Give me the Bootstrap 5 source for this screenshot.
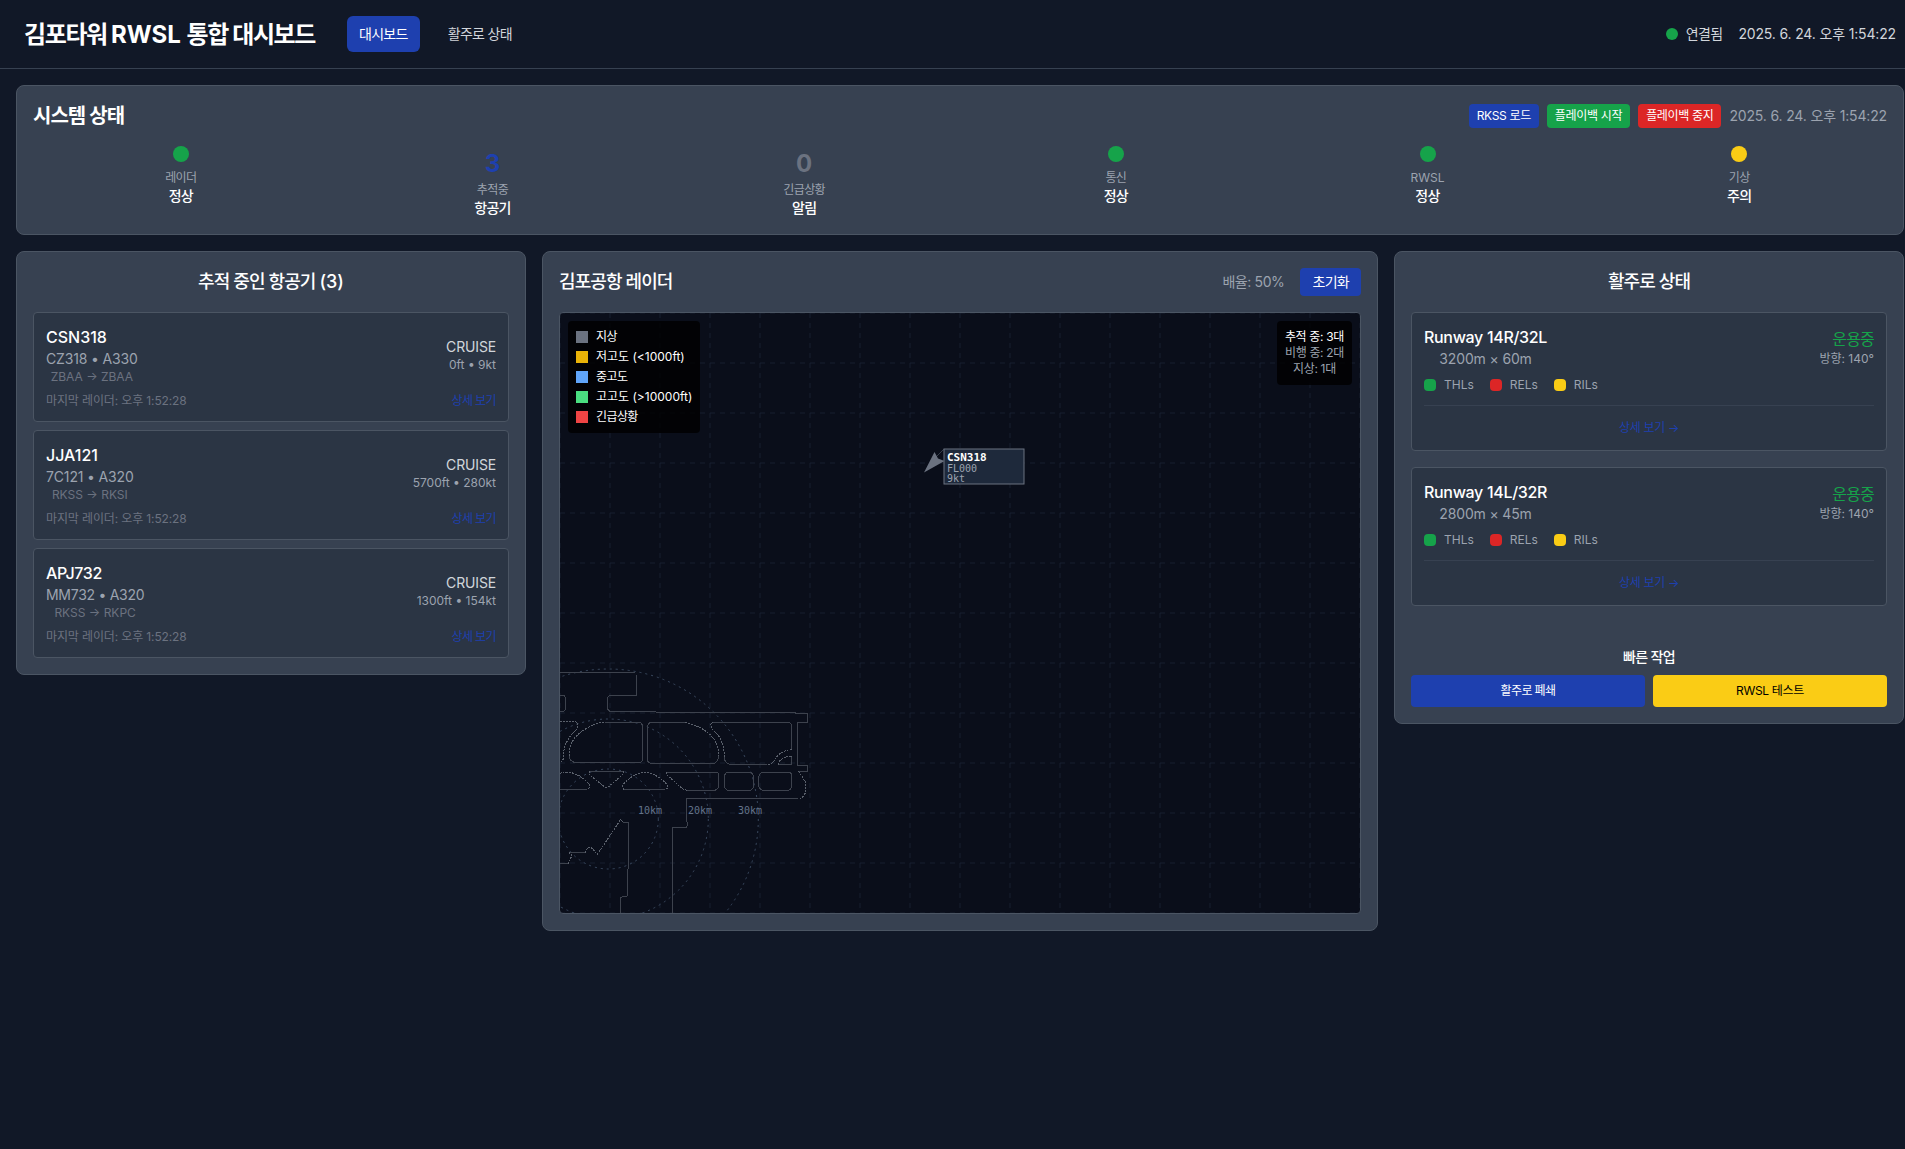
<!DOCTYPE html>
<html lang="ko">
<head>
<meta charset="utf-8">
<title>김포타워 RWSL 통합 대시보드</title>
<meta name="viewport" content="width=device-width, initial-scale=1">
<link href="https://cdn.jsdelivr.net/npm/bootstrap@5.3.0/dist/css/bootstrap.min.css" rel="stylesheet">
<style>
body{background:#111827;color:#fff;font-family:Inter,"Noto Sans CJK KR",sans-serif;font-size:16px;line-height:24px;min-height:100vh;overflow-x:hidden}
h1,h2,h3,h4,p{margin:0}
.topbar{height:69px;border-bottom:1px solid #374151;padding:0 9px 0 24px}
.brand{font-size:24px;line-height:32px;font-weight:700;margin-right:32px;padding-top:1px}
.ko{letter-spacing:-.05em}
.ko-title{letter-spacing:-.058em}
.ko-s{letter-spacing:-.028em}
.num-text{letter-spacing:-.011em}
.rw{letter-spacing:-.02em}
.w5{font-weight:500}
.t12{font-size:12px;line-height:16px}
.t14{font-size:14px;line-height:20px}
.t18{font-size:18px;line-height:28px;font-weight:500}
.t20{font-size:20px;line-height:28px;font-weight:600}
.c3{color:#d1d5db}.c4{color:#9ca3af}.c5{color:#6b7280}.cb{color:#1e40af}.cg{color:#16a34a}
.btn{--bs-btn-border-width:0;--bs-btn-border-radius:4px;--bs-btn-color:#fff}
.b-blue,.b-blue:hover{background:#1e40af;color:#fff}
.b-green,.b-green:hover{background:#16a34a;color:#fff}
.b-red,.b-red:hover{background:#dc2626;color:#fff}
.b-yel,.b-yel:hover{background:#facc15;color:#000}
.nav-btn{padding:8px 12px;font-size:14px;line-height:20px;--bs-btn-border-radius:6px}
.btn-xs{padding:4px 8px;font-size:12px;line-height:16px}
.btn-s{padding:4px 12px;font-size:14px;line-height:20px}
.btn-q{padding:8px;font-size:12px;line-height:16px}
.dot{border-radius:50%;display:inline-block}
.d12{width:12px;height:12px}.d16{width:16px;height:16px;margin-bottom:8px}
.g{background:#16a34a}.y{background:#facc15}.r{background:#dc2626}
.page{padding:16px 1px 16px 16px}
.panel{background:#374151;border:1px solid #4b5563;border-radius:8px;padding:16px}
.num{font-size:24px;line-height:35px;font-weight:700;margin-bottom:1px}
.stat-col{flex:1 1 0;display:flex;flex-direction:column;align-items:center}
.side{width:510px;flex:none}
.box{background:#2b3544;border:1px solid #4b5563;border-radius:4px;padding:12px}
.sw{width:12px;height:12px}.sw-r{border-radius:4px}
.rule{border-top:1px solid #374151;margin-top:12px;padding-top:12px;font-size:12px;line-height:20px}
.radar{position:relative;width:802px;height:602px;border:1px solid #4b5563;border-radius:4px;background:#0a0e1a;overflow:hidden}
.radar svg{display:block}
.float{position:absolute;top:8px;padding:8px;border-radius:4px;background:rgba(0,0,0,.8)}
.float-l{left:8px}.float-r{right:8px}
.mono{font-family:"DejaVu Sans Mono",monospace}
.twy path{vector-effect:non-scaling-stroke}
</style>
</head>
<body>
<header class="topbar d-flex align-items-center justify-content-between">
  <div class="d-flex align-items-center">
    <h1 class="brand"><span class="ko-title">김포타워 </span>RWSL <span class="ko-title">통합 대시보드</span></h1>
    <nav class="d-flex gap-3"><a class="btn b-blue nav-btn ko">대시보드</a><a class="btn nav-btn c3 ko">활주로 상태</a></nav>
  </div>
  <div class="d-flex align-items-center gap-3 t14 c3">
    <span class="d-flex align-items-center gap-2 ko"><i class="dot d12 g"></i>연결됨</span><span class="num-text">2025. 6. 24. 오후 1:54:22</span>
  </div>
</header>
<main class="page d-flex flex-column gap-3">
  <section class="panel">
    <div class="d-flex justify-content-between align-items-center mb-3">
      <h2 class="t20 ko">시스템 상태</h2>
      <div class="d-flex align-items-center gap-2">
        <button class="btn b-blue btn-xs ko-s">RKSS 로드</button><button class="btn b-green btn-xs ko-s">플레이백 시작</button><button class="btn b-red btn-xs ko-s">플레이백 중지</button>
        <span class="t14 c4 num-text">2025. 6. 24. 오후 1:54:22</span>
      </div>
    </div>
    <div class="d-flex gap-3">
      <div class="stat-col"><i class="dot d16 g"></i><span class="t12 c4 ko">레이더</span><span class="t14 w5 ko">정상</span></div>
      <div class="stat-col"><div class="num cb">3</div><span class="t12 c4 ko">추적중</span><span class="t14 w5 ko">항공기</span></div>
      <div class="stat-col"><div class="num c5">0</div><span class="t12 c4 ko">긴급상황</span><span class="t14 w5 ko">알림</span></div>
      <div class="stat-col"><i class="dot d16 g"></i><span class="t12 c4 ko">통신</span><span class="t14 w5 ko">정상</span></div>
      <div class="stat-col"><i class="dot d16 g"></i><span class="t12 c4">RWSL</span><span class="t14 w5 ko">정상</span></div>
      <div class="stat-col"><i class="dot d16 y"></i><span class="t12 c4 ko">기상</span><span class="t14 w5 ko">주의</span></div>
    </div>
  </section>
  <div class="d-flex align-items-start gap-3">
    <section class="panel side text-center">
      <h3 class="t18 mb-3"><span class="ko">추적 중인 항공기 </span>(3)</h3>
      <div class="d-flex flex-column gap-2">
        <div class="box">
          <div class="d-flex justify-content-between align-items-center mb-2">
            <div><div class="w5 text-start">CSN318</div><div class="t14 c4 num-text">CZ318 • A330</div><div class="t12 c5">ZBAA → ZBAA</div></div>
            <div class="text-end"><div class="t14 c3 num-text">CRUISE</div><div class="t12 c4">0ft • 9kt</div></div>
          </div>
          <div class="d-flex justify-content-between t12 c5"><span class="num-text">마지막 레이더: 오후 1:52:28</span><span class="cb ko">상세 보기</span></div>
        </div>
        <div class="box">
          <div class="d-flex justify-content-between align-items-center mb-2">
            <div><div class="w5 text-start">JJA121</div><div class="t14 c4 num-text">7C121 • A320</div><div class="t12 c5">RKSS → RKSI</div></div>
            <div class="text-end"><div class="t14 c3 num-text">CRUISE</div><div class="t12 c4">5700ft • 280kt</div></div>
          </div>
          <div class="d-flex justify-content-between t12 c5"><span class="num-text">마지막 레이더: 오후 1:52:28</span><span class="cb ko">상세 보기</span></div>
        </div>
        <div class="box">
          <div class="d-flex justify-content-between align-items-center mb-2">
            <div><div class="w5 text-start rw">APJ732</div><div class="t14 c4 rw">MM732 • A320</div><div class="t12 c5">RKSS → RKPC</div></div>
            <div class="text-end"><div class="t14 c3 num-text">CRUISE</div><div class="t12 c4">1300ft • 154kt</div></div>
          </div>
          <div class="d-flex justify-content-between t12 c5"><span class="num-text">마지막 레이더: 오후 1:52:28</span><span class="cb ko">상세 보기</span></div>
        </div>
      </div>
    </section>

    <section class="panel flex-grow-1">
      <div class="d-flex justify-content-between align-items-center mb-3">
        <h3 class="t18 ko">김포공항 레이더</h3>
        <div class="d-flex align-items-center gap-3"><span class="t14 c4 ko-s">배율: 50%</span><button class="btn b-blue btn-s ko">초기화</button></div>
      </div>
      <div class="radar">
        <svg width="800" height="600" viewBox="0 0 800 600" fill="none">
          <path stroke="#1e293b" stroke-width="1" stroke-dasharray="5 5" opacity=".65" d="M0 0V600M50 0V600M100 0V600M150 0V600M200 0V600M250 0V600M300 0V600M350 0V600M400 0V600M450 0V600M500 0V600M550 0V600M600 0V600M650 0V600M700 0V600M750 0V600M800 0V600M0 0H800M0 50H800M0 100H800M0 150H800M0 200H800M0 250H800M0 300H800M0 350H800M0 400H800M0 450H800M0 500H800M0 550H800M0 600H800"/>
          <g stroke="#3b4a60" stroke-dasharray="2 4"><circle cx="48.300" cy="506" r="50"/><circle cx="48.300" cy="506" r="100"/><circle cx="48.300" cy="506" r="150"/></g>
          <!-- taxiways and aprons -->
          <g class="twy" stroke="#3d424d" shape-rendering="crispEdges" transform="translate(-10 337) scale(.33333)">
            <path d="M30 67H255M260 76V136H180L173 142V178L180 184H262L345 187L735 188L740 191H773V217H743V346H773V364H746"/>
            <path d="M30 136H40Q47 138 47 150V172Q47 184 38 185H30"/>
            <path d="M165 217H266Q278 218 278 232V328Q276 337 268 338H80Q58 336 58 318"/>
            <path d="M405 217H304Q293 218 292 232V328Q293 340 308 341H488Q504 340 506 318"/>
            <path d="M488 217H715Q724 218 725 228V297M652 343H540Q524 340 523 322"/>
            <path d="M725 319V343H686"/>
            <path d="M30 418H112M118 364H222M346 418H222M348 367H498Q507 368 507 376V408Q504 420 492 421H412"/>
            <path d="M534 367H600Q610 370 611 382V408Q608 420 598 421H534Q524 418 523 408V380Q525 368 534 367Z"/>
            <path d="M638 367H716Q725 368 725 378V410Q722 421 712 421H640Q627 418 626 406V382Q628 368 638 367Z"/>
            <path d="M745 445H412M410 445V510L412 522L410 532H368V789"/>
            <path d="M30 642H54M58 608H106M218 517H236V655L232 658V738L212 742V789"/>
            <g stroke="#5a606b" stroke-dasharray="2 1">
              <path d="M746 364L767 397V420Q765 445 745 445"/>
              <path d="M30 214H76Q90 222 78 240Q48 268 42 300V315Q40 335 30 338"/>
              <path d="M58 318Q55 265 110 235Q140 217 165 217M405 217Q455 228 484 258Q506 280 506 318"/>
              <path d="M725 297Q690 304 676 326Q668 343 652 343M523 322Q522 270 496 247Q474 225 488 217"/>
              <path d="M686 343Q682 340 690 332Q700 320 725 319"/>
              <path d="M30 370Q42 366 60 367Q90 374 112 396Q126 410 112 418"/>
              <path d="M222 364V370L176 410Q168 414 160 408L118 374V364"/>
              <path d="M222 418Q212 410 224 398Q255 368 284 367Q314 368 345 397Q360 414 346 418"/>
              <path d="M412 421Q398 418 390 410L350 374V367"/>
              <path d="M54 642L66 616L58 608M106 608L112 594L123 592L142 613L174 566L212 508L218 517"/>
            </g>
          </g>
          <g class="mono" font-size="10" fill="#64748b"><text x="78" y="501">10km</text><text x="128" y="501">20km</text><text x="178" y="501">30km</text></g>
          <path stroke="#4b5563" stroke-width=".7" d="M374 146L384 136"/>
          <path fill="#6b7280" d="M364 159.500L374.500 139L378 145.500L384.500 148Z"/>
          <rect x="384" y="136" width="80" height="35" fill="#1e293b" stroke="#6b7280"/>
          <text class="mono" x="387" y="148" font-size="11" font-weight="700" fill="#fff">CSN318</text>
          <g class="mono" font-size="10" fill="#9ca3af"><text x="387" y="159">FL000</text><text x="387" y="169">9kt</text></g>
        </svg>
        <div class="float float-l t12 d-flex flex-column gap-1">
          <div class="d-flex align-items-center gap-2"><i class="sw" style="background:#6b7280"></i><span class="ko">지상</span></div>
          <div class="d-flex align-items-center gap-2"><i class="sw" style="background:#eab308"></i>저고도 (&lt;1000ft)</div>
          <div class="d-flex align-items-center gap-2"><i class="sw" style="background:#60a5fa"></i><span class="ko">중고도</span></div>
          <div class="d-flex align-items-center gap-2"><i class="sw" style="background:#4ade80"></i>고고도 (&gt;10000ft)</div>
          <div class="d-flex align-items-center gap-2"><i class="sw" style="background:#ef4444"></i><span class="ko">긴급상황</span></div>
        </div>
        <div class="float float-r t12 text-center ko-s"><div>추적 중: 3대</div><div class="c4">비행 중: 2대</div><div class="c4">지상: 1대</div></div>
      </div>
    </section>

    <section class="panel side text-center">
      <h3 class="t18 mb-3 ko">활주로 상태</h3>
      <div class="d-flex flex-column gap-3">
        <div class="box">
          <div class="d-flex justify-content-between align-items-center mb-2">
            <div><div class="w5 rw">Runway 14R/32L</div><div class="t14 c4 num-text">3200m × 60m</div></div>
            <div class="text-end"><div class="cg ko">운용중</div><div class="t12 c4">방향: 140°</div></div>
          </div>
          <div class="d-flex gap-3 t12 c4">
            <span class="d-flex align-items-center gap-2"><i class="sw sw-r g"></i>THLs</span><span class="d-flex align-items-center gap-2"><i class="sw sw-r r"></i>RELs</span><span class="d-flex align-items-center gap-2"><i class="sw sw-r y"></i>RILs</span>
          </div>
          <div class="rule cb ko-s">상세 보기 →</div>
        </div>
        <div class="box">
          <div class="d-flex justify-content-between align-items-center mb-2">
            <div><div class="w5 rw">Runway 14L/32R</div><div class="t14 c4 num-text">2800m × 45m</div></div>
            <div class="text-end"><div class="cg ko">운용중</div><div class="t12 c4">방향: 140°</div></div>
          </div>
          <div class="d-flex gap-3 t12 c4">
            <span class="d-flex align-items-center gap-2"><i class="sw sw-r g"></i>THLs</span><span class="d-flex align-items-center gap-2"><i class="sw sw-r r"></i>RELs</span><span class="d-flex align-items-center gap-2"><i class="sw sw-r y"></i>RILs</span>
          </div>
          <div class="rule cb ko-s">상세 보기 →</div>
        </div>
      </div>
      <h4 class="t14 w5 mb-2 ko" style="margin-top:41px">빠른 작업</h4>
      <div class="d-flex gap-2"><button class="btn b-blue btn-q w-50 ko">활주로 폐쇄</button><button class="btn b-yel btn-q w-50 ko-s">RWSL 테스트</button></div>
    </section>
  </div>
</main>
<script src="https://cdn.jsdelivr.net/npm/bootstrap@5.3.0/dist/js/bootstrap.bundle.min.js"></script>
</body>
</html>
